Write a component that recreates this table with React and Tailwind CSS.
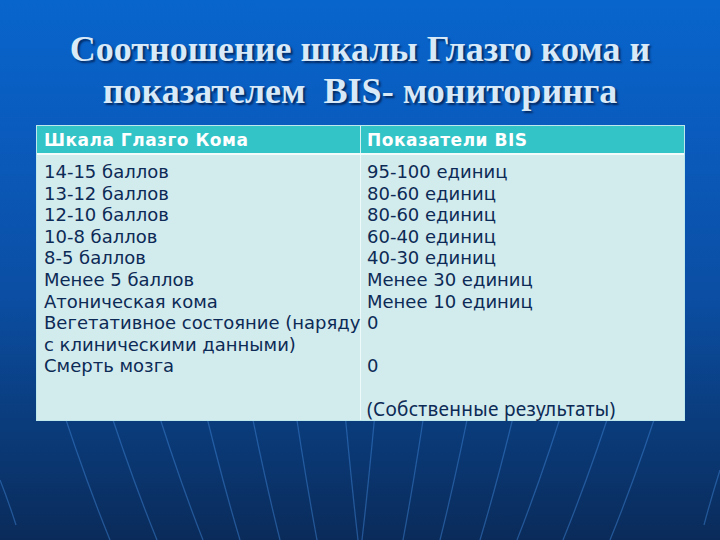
import React from "react";

const leftRows = [
  "14-15 баллов",
  "13-12 баллов",
  "12-10 баллов",
  "10-8 баллов",
  "8-5 баллов",
  "Менее 5 баллов",
  "Атоническая кома",
  "Вегетативное состояние (наряду",
  "с клиническими данными)",
  "Смерть мозга",
];

const rightRows = [
  "95-100 единиц",
  "80-60 единиц",
  "80-60 единиц",
  "60-40 единиц",
  "40-30 единиц",
  "Менее 30 единиц",
  "Менее 10 единиц",
  "0",
  "\u00a0",
  "0",
  "\u00a0",
];

const lines = [
  [65, 110], [112, 157], [160, 203], [210, 240], [257, 280], [303, 317], [354, 358],
];

function Background() {
  return (
    <svg className="absolute inset-0" width="720" height="540" viewBox="0 0 720 540">
      {lines.map(([a, b], i) => (
        <g key={i} fill="none" stroke="#3b7fd0" strokeWidth="1.3" strokeOpacity="0.5">
          <path d={`M${a - 12} 380 Q${(a + b) / 2 - 6} 470 ${b} 540`} />
          <path d={`M${720 - a + 12} 380 Q${720 - (a + b) / 2 + 6} 470 ${720 - b} 540`} />
        </g>
      ))}
      <path d="M0 480 Q8 500 16 525" fill="none" stroke="#3b7fd0" strokeWidth="1.3" strokeOpacity="0.5" />
      <path d="M720 470 Q712 495 704 525" fill="none" stroke="#3b7fd0" strokeWidth="1.3" strokeOpacity="0.5" />
    </svg>
  );
}

export default function App() {
  return (
    <div className="relative w-[720px] h-[540px] overflow-hidden bg-[linear-gradient(180deg,#0865cc_0%,#0a5bbd_25%,#0b4ea3_55%,#0a3c7c_78%,#0a2b5a_100%)]">
      <Background />
      <div className="relative flex flex-col">
        <h1 className="pt-[28px] text-center font-['Liberation_Serif',serif] font-bold text-[36px] leading-[42px] text-[#d8e9f8] [text-shadow:2px_2px_2px_rgba(0,25,70,0.75)] whitespace-pre">
          {"Соотношение шкалы Глазго кома и\nпоказателем  BIS- мониторинга"}
        </h1>
        <div className="ml-[36px] mt-[13px] w-[649px] border border-[#bfe8ec] font-['DejaVu_Sans',sans-serif]">
          <div className="flex h-[27px] bg-[#33c4c7] text-white font-bold text-[17px] leading-[27px] tracking-[0.5px]">
            <div className="w-[324px] pl-[7px] pt-[1px] border-r border-[#d6f2f3]">Шкала Глазго Кома</div>
            <div className="flex-1 pl-[6px] pt-[1px]">Показатели BIS</div>
          </div>
          <div className="h-[2px] bg-[#f4fbfb]" />
          <div className="flex h-[265px] bg-[#d2ebed] text-[#0c2a55] text-[18px] leading-[21.6px]">
            <div className="w-[324px] pl-[7px] pt-[6px] border-r border-[#eef9f9] whitespace-nowrap">
              {leftRows.map((t, i) => (
                <div key={i}>{t}</div>
              ))}
            </div>
            <div className="flex-1 pl-[6px] pt-[6px] whitespace-nowrap">
              {rightRows.map((t, i) => (
                <div key={i}>{t}</div>
              ))}
              <div className="font-['Noto_Sans',sans-serif] text-[19px] leading-[20px] tracking-[0.3px]">(Собственные результаты)</div>
            </div>
          </div>
        </div>
      </div>
    </div>
  );
}
